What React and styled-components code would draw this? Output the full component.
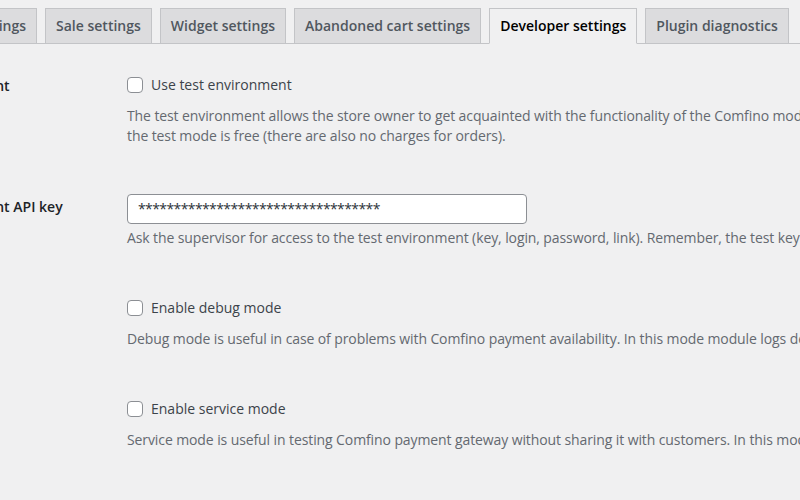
import React from "react";
import styled, { createGlobalStyle } from "styled-components";

const Global = createGlobalStyle`
  html, body { margin: 0; padding: 0; }
  body {
    background: #f0f0f1;
    overflow: hidden;
    width: 800px;
    height: 500px;
    font-family: "Open Sans", "Noto Sans", sans-serif;
    font-size: 14px;
    color: #3c434a;
  }
`;

const Page = styled.div`
  width: 1400px;
  margin-left: -110px;
`;

const TabBar = styled.nav`
  display: flex;
  padding-top: 8px;
  border-bottom: 1px solid #c3c4c7;
`;

const Tab = styled.a`
  margin-left: 8px;
  margin-bottom: -1px;
  padding: 5px 10px;
  font-size: 14px;
  line-height: 24px;
  font-weight: 600;
  white-space: nowrap;
  border: 1px solid #c3c4c7;
  border-bottom-color: ${(p) => (p.$active ? "#f0f0f1" : "#c3c4c7")};
  background: ${(p) => (p.$active ? "#f0f0f1" : "#dcdcde")};
  color: ${(p) => (p.$active ? "#000" : "#50575e")};
  text-decoration: none;
`;

const Table = styled.div`
  padding-top: 5px;
`;

const Row = styled.div`
  display: grid;
  grid-template-columns: 237px 1fr;
  padding: 24px 0;
`;

const Label = styled.div`
  padding-top: 1px;
  font-weight: 600;
  line-height: 24px;
  color: #1d2327;
  white-space: nowrap;
`;

const Field = styled.div`
  display: flex;
  flex-direction: column;
  align-items: flex-start;
`;

const CheckLine = styled.label`
  display: flex;
  align-items: center;
  gap: 8px;
  line-height: 24px;
  color: #3c434a;
`;

const Box = styled.span`
  width: 14px;
  height: 14px;
  border: 1px solid #8c8f94;
  border-radius: 4px;
  background: #fff;
`;

const Input = styled.div`
  box-sizing: border-box;
  width: 400px;
  height: 30px;
  padding: 0 8px 0 10px;
  border: 1px solid #8c8f94;
  border-radius: 4px;
  background: #fff;
  color: #2c3338;
  line-height: 28px;
  font-size: 14px;
  letter-spacing: -0.6px;
`;

const Description = styled.p`
  margin: ${(p) => (p.$tight ? "4px" : "9px")} 0 0;
  line-height: 20px;
  color: #646970;
  white-space: nowrap;
  letter-spacing: -0.1px;
`;

const tabs = [
  "Payment settings",
  "Sale settings",
  "Widget settings",
  "Abandoned cart settings",
  "Developer settings",
  "Plugin diagnostics",
];

export default function App() {
  return (
    <>
      <Global />
      <Page>
        <TabBar>
          {tabs.map((t) => (
            <Tab key={t} $active={t === "Developer settings"}>
              {t}
            </Tab>
          ))}
        </TabBar>
        <Table>
          <Row>
            <Label>Test environment</Label>
            <Field>
              <CheckLine>
                <Box />
                Use test environment
              </CheckLine>
              <Description>
                The test environment allows the store owner to get acquainted with the functionality of the Comfino module. This is a Comfino simulator, thanks to which you can get to know all the advantages of this payment method. The use of
                <br />
                the test mode is free (there are also no charges for orders).
              </Description>
            </Field>
          </Row>
          <Row>
            <Label>Test environment API key</Label>
            <Field>
              <Input>**********************************</Input>
              <Description $tight>
                Ask the supervisor for access to the test environment (key, login, password, link). Remember, the test key is different from the production key.
              </Description>
            </Field>
          </Row>
          <Row>
            <Label>Debug mode</Label>
            <Field>
              <CheckLine>
                <Box />
                Enable debug mode
              </CheckLine>
              <Description>
                Debug mode is useful in case of problems with Comfino payment availability. In this mode module logs details of internal process responsible for displaying of Comfino payment option at the payment methods list.
              </Description>
            </Field>
          </Row>
          <Row>
            <Label>Service mode</Label>
            <Field>
              <CheckLine>
                <Box />
                Enable service mode
              </CheckLine>
              <Description>
                Service mode is useful in testing Comfino payment gateway without sharing it with customers. In this mode Comfino payment method is visible only for selected sessions and debug logs are collected only for these sessions.
              </Description>
            </Field>
          </Row>
        </Table>
      </Page>
    </>
  );
}
